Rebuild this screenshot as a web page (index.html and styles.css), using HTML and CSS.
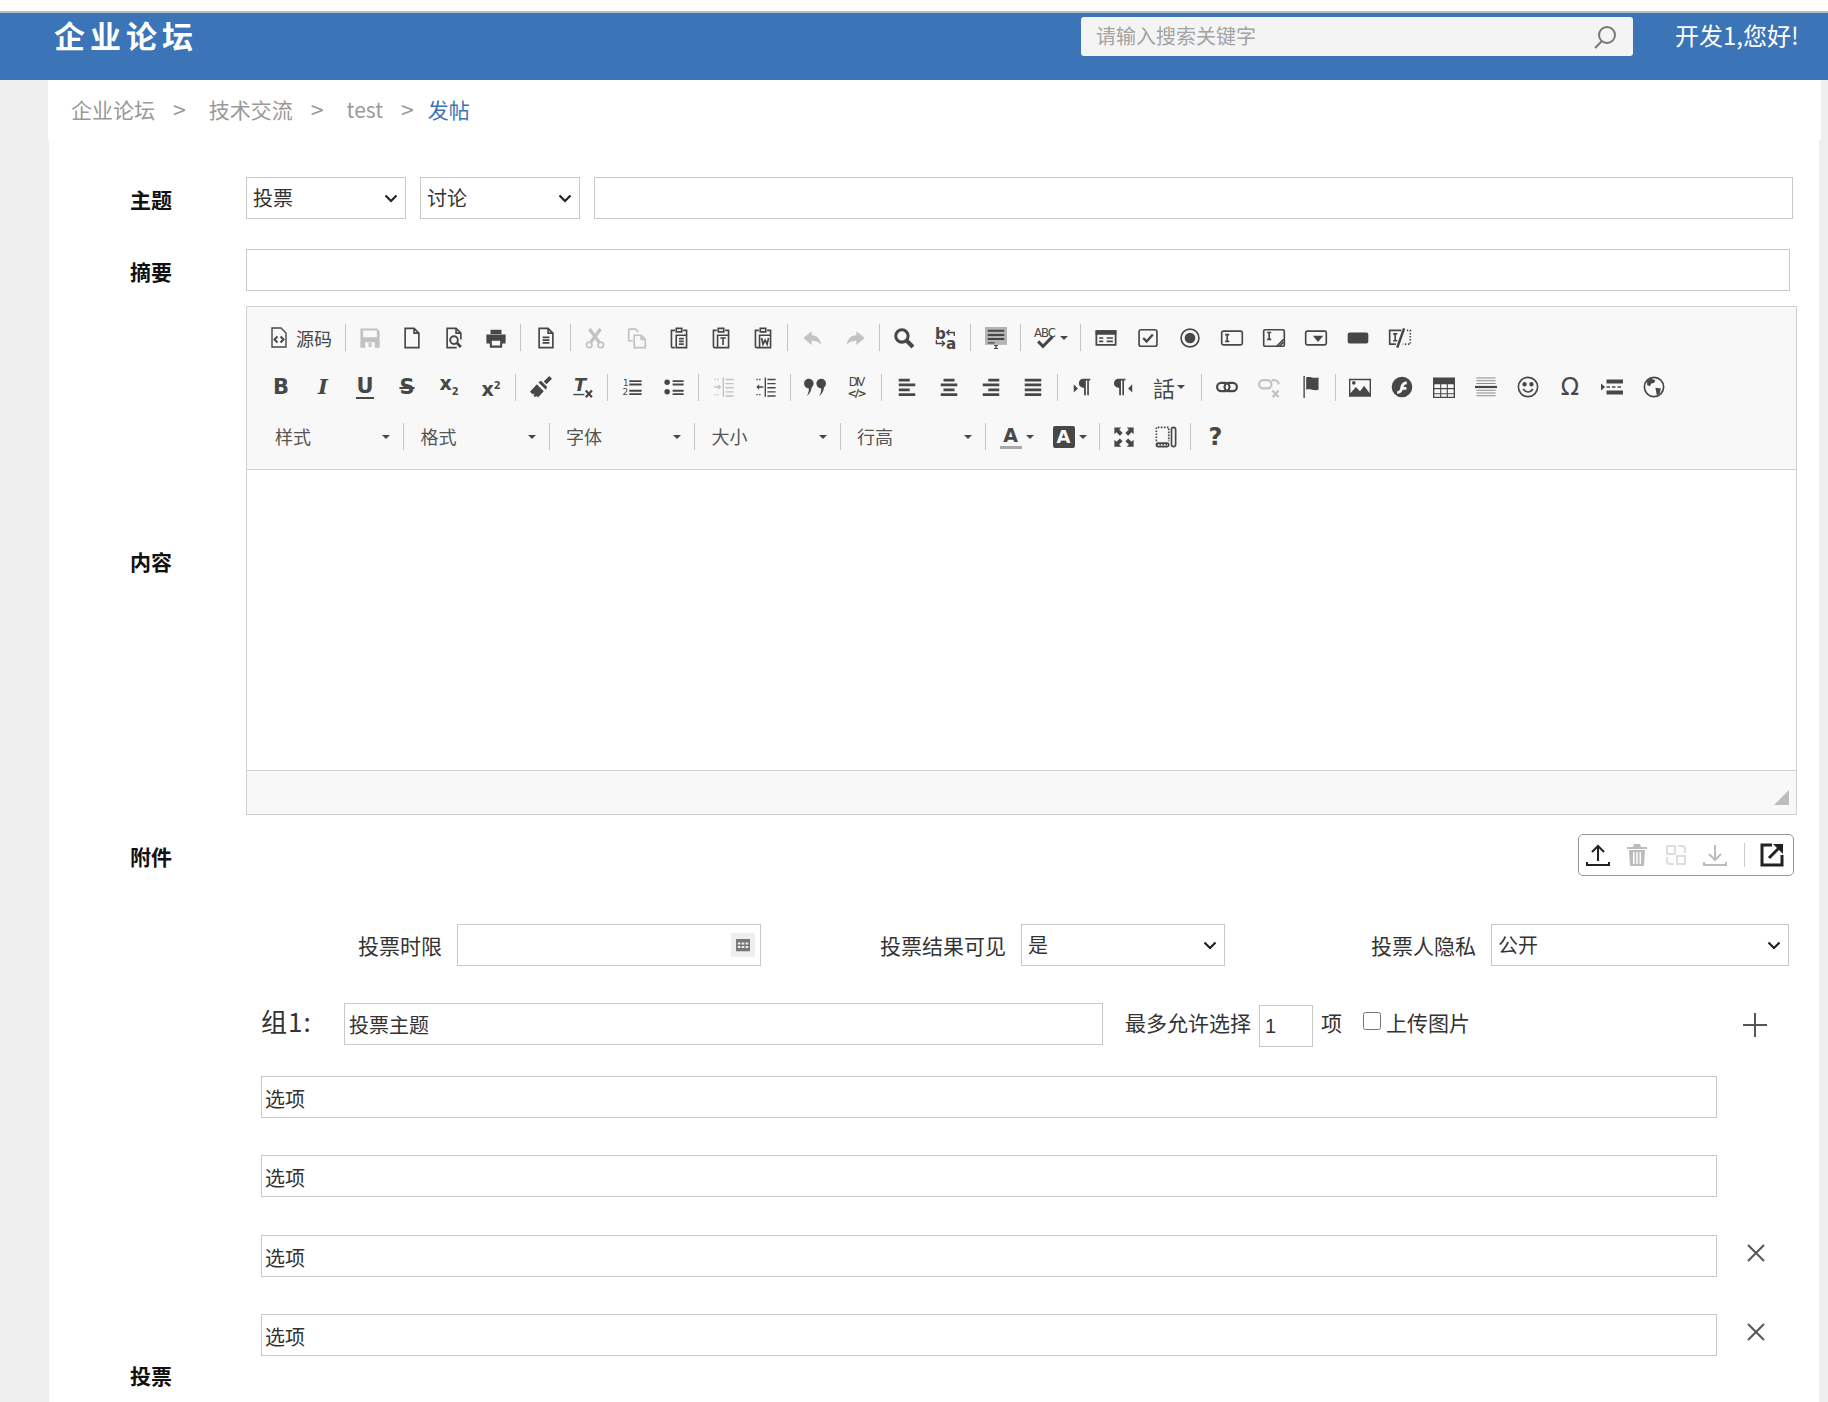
FILE: index.html
```html
<!DOCTYPE html>
<html>
	<head>
		<meta charset="UTF-8">
		<title>发帖</title>
		<link rel="stylesheet" href="styles.css">
	</head>

	<body>
		<div class="topLine"></div>
		<div class="header">
			<div class="brand">企业论坛</div>
			<div class="search">
				<span class="searchText">请输入搜索关键字</span>
				<svg class="searchIcon" viewBox="0 0 25 24"><circle cx="15" cy="10" r="8"/><path d="M10 16L3 23"/></svg>
			</div>
			<div class="hello">开发1,您好!</div>
		</div>

		<div class="crumb">
			<span>企业论坛</span><i>&gt;</i>
			<span>技术交流</span><i>&gt;</i>
			<span>test</span><i>&gt;</i>
			<a href="#">发帖</a>
		</div>

		<div class="form">
			<!--主题-->
			<div class="formRow first">
				<label class="name">主题</label>
				<select class="sel"><option>投票</option></select>
				<select class="sel"><option>讨论</option></select>
				<input class="txt titleInput" type="text">
			</div>
			<!--摘要-->
			<div class="formRow second">
				<label class="name">摘要</label>
				<input class="txt summaryInput" type="text">
			</div>
			<!--内容，编辑器-->
			<div class="formRow third">
				<label class="name">内容</label>
				<div class="editor">
					<div class="tools">
						<div class="toolRow">
							<span class="btn source">
								<svg class="sk" viewBox="0 0 16 21"><path d="M1 1h9l5 5v14H1z" stroke-width="1.400"/><path d="M6.500 9.500l-3 3 3 3M9.500 9.500l3 3-3 3" stroke-width="2"/></svg>
								<em>源码</em>
							</span>
							<b class="sep"></b>
							<span class="btn off"><svg viewBox="0 0 16 16"><path fill-rule="evenodd" d="M1 1h12l2 2v12H1zM3 2.500v5h10v-5zM4.500 11v4h7v-4zM7 11.500h2v3H7z"/></svg></span>
							<span class="btn"><svg class="sk" viewBox="0 0 16 16"><path d="M3 1h6.500L13 4.500V15H3zM9.500 1v3.500H13"/></svg></span>
							<span class="btn"><svg class="sk" viewBox="0 0 16 16"><path d="M10 15H3V1h6.500L13 4.500V9M9.500 1v3.500H13"/><circle cx="8" cy="9.500" r="2.800" stroke-width="1.400"/><path d="M10 11.500l3 3" stroke-width="2"/></svg></span>
							<span class="btn"><svg viewBox="0 0 16 16"><path fill-rule="evenodd" d="M4 2h8v3H4zM1 5.500h14V12h-2.500v3h-9v-3H1zM5 10v3.500h6V10z"/></svg></span>
							<b class="sep"></b>
							<span class="btn"><svg class="sk" viewBox="0 0 16 16"><path d="M3 1h6.500L13 4.500V15H3zM9.500 1v3.500H13M5.500 7.500h5M5.500 9.500h5M5.500 11.500h5"/></svg></span>
							<b class="sep"></b>
							<span class="btn off"><svg class="sk" viewBox="0 0 16 16"><path d="M4 1.500l7 9.500M12 1.500L5 11" stroke-width="2.400"/><circle cx="3.800" cy="13" r="2"/><circle cx="12.200" cy="13" r="2"/></svg></span>
							<span class="btn off"><svg class="sk" viewBox="0 0 16 16"><path d="M2 1.500h5l2 2M2 1.500V10h3M6 6h5l3 3v6H6zM11 6v3h3"/></svg></span>
							<span class="btn"><svg class="sk" viewBox="0 0 16 16"><path d="M5 2.500H2.500V14c0 .600.400 1 1 1H5M11 2.500h2.500V14M6 1h4v2.500H6zM6 6h7.500v9H6zM8 8.500h3.500M8 10.500h3.500M8 12.500h3.500"/></svg></span>
							<span class="btn"><svg class="sk" viewBox="0 0 16 16"><path d="M5 2.500H2.500V14c0 .600.400 1 1 1H5M11 2.500h2.500V14M6 1h4v2.500H6zM5.500 6h8v9h-8zM7.500 8h4M9.500 8v5"/></svg></span>
							<span class="btn"><svg class="sk" viewBox="0 0 16 16"><path d="M5 2.500H2.500V14c0 .600.400 1 1 1H5M11 2.500h2.500V14M6 1h4v2.500H6zM5.500 6h8v9h-8zM7 8l1 4.500 1.500-3 1.500 3L12 8"/></svg></span>
							<b class="sep"></b>
							<span class="btn off"><svg viewBox="0 0 16 16"><path d="M7 3L1 8l6 5v-3c3 0 5 .500 7 3-.500-4-3-7-7-7z"/></svg></span>
							<span class="btn off"><svg viewBox="0 0 16 16"><path d="M9 3l6 5-6 5v-3c-3 0-5 .500-7 3 .500-4 3-7 7-7z"/></svg></span>
							<b class="sep"></b>
							<span class="btn"><svg class="sk" viewBox="0 0 16 16"><circle cx="6.500" cy="6.500" r="4.500" stroke-width="2.200"/><path d="M10 10l4.500 4.500" stroke-width="3"/></svg></span>
							<span class="btn"><svg viewBox="0 0 16 16"><text class="small" x="0" y="8.500" font-size="11" font-weight="700">b</text><text class="small" x="8" y="16" font-size="11" font-weight="700">a</text><path class="thin" d="M8.500 4h5.500v2.500M10.500 2l-2 2 2 2M1 9.500V12h5.500M5 10l2 2-2 2"/></svg></span>
							<b class="sep"></b>
							<span class="btn"><svg viewBox="0 0 16 16"><path fill="#b5b5b5" d="M0 0h16v13H0z"/><path d="M2 2h12v1.500H2zM2 5h12v1.500H2zM2 8h12v1.500H2zM2 11h5v1H2zM6.500 13h3v.8h-1v1.400h1v.8h-3v-.8h1v-1.400h-1z"/></svg></span>
							<b class="sep"></b>
							<span class="btn wide"><svg viewBox="0 0 16 16"><text class="small" x="0" y="7.500" font-size="8.500" textLength="16">ABC</text><path class="thick" d="M3 10.500l3.500 3.500 7-7"/></svg><u class="caret"></u></span>
							<b class="sep"></b>
							<span class="btn"><svg class="sk" viewBox="0 0 16 16"><path d="M1 3h14v10H1z" stroke-width="1.300"/><path d="M1 3h14v2H1z" fill="#474747"/><path d="M3 8h3M3 10.500h3M8.500 8H13M8.500 10.500H13" stroke-width="1.200"/></svg></span>
							<span class="btn"><svg class="sk" viewBox="0 0 16 16"><rect x="1.500" y="2" width="13" height="12" rx="1.500"/><path d="M4.500 8l2.500 2.500 4.500-5" stroke-width="1.700"/></svg></span>
							<span class="btn"><svg class="sk" viewBox="0 0 16 16"><circle cx="8" cy="8" r="6.500"/><circle cx="8" cy="8" r="3.300" fill="#474747"/></svg></span>
							<span class="btn"><svg class="sk" viewBox="0 0 16 16"><rect x=".5" y="3" width="15" height="10" rx="1.200"/><path d="M3 5.500h3M3 10.500h3M4.500 5.500v5"/></svg></span>
							<span class="btn"><svg class="sk" viewBox="0 0 16 16"><rect x=".5" y="2" width="15" height="12" rx="1"/><path d="M3 4h3M3 9h3M4.500 4v5M15 9l-5 5M15 11l-3 3"/></svg></span>
							<span class="btn"><svg class="sk" viewBox="0 0 16 16"><rect x=".5" y="3" width="15" height="10" rx="1.200"/><path d="M7 7h5l-2.500 3z" fill="#474747"/></svg></span>
							<span class="btn"><svg viewBox="0 0 16 16"><rect x=".5" y="4" width="15" height="8" rx="1.500"/></svg></span>
							<span class="btn"><svg class="sk" viewBox="0 0 16 16"><path d="M9 2.500H.5v10H5M3 5h3M3 10h3M4.500 5v5" /><path d="M11 1L6 15" stroke-width="1.800"/><path d="M13 2.500h2.500v10H10" stroke-dasharray="1 1.200"/></svg></span>
						</div>

						<div class="toolRow">
							<span class="btn"><strong class="glyph">B</strong></span>
							<span class="btn"><strong class="glyph serif">I</strong></span>
							<span class="btn"><strong class="glyph under">U</strong></span>
							<span class="btn"><strong class="glyph strike">S</strong></span>
							<span class="btn"><strong class="glyph small">x<sub>2</sub></strong></span>
							<span class="btn"><strong class="glyph small">x<sup>2</sup></strong></span>
							<b class="sep"></b>
							<span class="btn"><svg viewBox="0 0 16 16"><path d="M0 11.500l5-5.500 5 5-4 4.500c-1-1-1.500-.800-2.500-.300l-1-1 .8-1.500-1.500.5z"/><path d="M6 4.500l2-1 4.500 4.500-1 2zM10 4l4-4 2 2-4 4z"/></svg></span>
							<span class="btn"><svg viewBox="0 0 16 16"><text class="small italic" x="1.500" y="11" font-size="13" font-weight="700">T</text><path d="M1 13h8v1H1z"/><path class="thin bold" d="M10 10.500l4.500 5M14.500 10.500l-4.500 5"/></svg></span>
							<b class="sep"></b>
							<span class="btn"><svg viewBox="0 0 16 16"><text class="small" x="1.500" y="7" font-size="6.500">1</text><text class="small" x="1" y="14" font-size="6.500">2</text><path d="M6 3h9v1.400H6zM6 5.500h9v1.400H6zM6 10h9v1.400H6zM6 12.500h9v1.400H6z"/></svg></span>
							<span class="btn"><svg viewBox="0 0 16 16"><circle cx="3" cy="4.500" r="2"/><circle cx="3" cy="11.500" r="2"/><path d="M7 3h8v1.400H7zM7 5.500h8v1.400H7zM7 10h8v1.400H7zM7 12.500h8v1.400H7z"/></svg></span>
							<b class="sep"></b>
							<span class="btn off"><svg viewBox="0 0 16 16"><path d="M7 1h1v14H7zM9 2h6v1H9zM9 5h6v1H9zM9 8h6v1H9zM9 11h6v1H9zM9 14h6v1H9zM1 7.500h3V6l2 2-2 2V8.500H1zM1 2h1v1H1zM3 2h1v1H3zM1 13h1v1H1zM3 13h1v1H3z"/></svg></span>
							<span class="btn"><svg viewBox="0 0 16 16"><path d="M7 1h1v14H7zM9 2h6v1H9zM9 5h6v1H9zM9 8h6v1H9zM9 11h6v1H9zM9 14h6v1H9zM6 7.500H3V6L1 8l2 2V8.500h3zM1 2h1v1H1zM3 2h1v1H3zM1 13h1v1H1zM3 13h1v1H3z"/></svg></span>
							<b class="sep"></b>
							<span class="btn"><svg viewBox="0 0 16 16"><circle cx="3.500" cy="5.500" r="3.500"/><circle cx="12.500" cy="5.500" r="3.500"/><path d="M5.500 6c.500 3.500-1 7-3.500 8.500 1.200-2 1.800-4 1.500-7.500zM14.500 6c.500 3.500-1 7-3.500 8.500 1.200-2 1.800-4 1.500-7.500z"/></svg></span>
							<span class="btn"><svg viewBox="0 0 16 16"><text class="small" x="2" y="7.500" font-size="8.500" textLength="12">DIV</text><text class="small" x="1" y="15.500" font-size="8" font-weight="700" textLength="14">&lt;/&gt;</text></svg></span>
							<b class="sep"></b>
							<span class="btn"><svg viewBox="0 0 16 16"><path d="M2 2h8v2H2zM2 5.500h12v2H2zM2 9h8v2H2zM2 12.500h12v2H2z"/></svg></span>
							<span class="btn"><svg viewBox="0 0 16 16"><path d="M4 2h8v2H4zM2 5.500h12v2H2zM4 9h8v2H4zM2 12.500h12v2H2z"/></svg></span>
							<span class="btn"><svg viewBox="0 0 16 16"><path d="M6 2h8v2H6zM2 5.500h12v2H2zM6 9h8v2H6zM2 12.500h12v2H2z"/></svg></span>
							<span class="btn"><svg viewBox="0 0 16 16"><path d="M2 2h12v2H2zM2 5.500h12v2H2zM2 9h12v2H2zM2 12.500h12v2H2z"/></svg></span>
							<b class="sep"></b>
							<span class="btn"><svg viewBox="0 0 16 16"><path d="M2 6l3 3-3 3zM8.500 2H14v1.200h-1V14h-1.200V3.200h-1V14H9.500V8.500a3.200 3.200 0 0 1-1-6.500z"/></svg></span>
							<span class="btn"><svg viewBox="0 0 16 16"><path d="M14 6l-3 3 3 3zM3.500 2H9v1.200H8V14H6.800V3.200h-1V14H4.500V8.500a3.200 3.200 0 0 1-1-6.500z"/></svg></span>
							<span class="btn wide lang"><span class="langText">話</span><u class="caret"></u></span>
							<b class="sep"></b>
							<span class="btn"><svg class="sk" viewBox="0 0 16 16"><rect x=".8" y="5" width="9" height="6" rx="3" stroke-width="1.600"/><rect x="6.200" y="5" width="9" height="6" rx="3" stroke-width="1.600"/></svg></span>
							<span class="btn off"><svg class="sk" viewBox="0 0 16 16"><rect x=".8" y="3" width="9" height="6" rx="3" stroke-width="1.600"/><path d="M10 3h2a3 3 0 0 1 3 3M10.500 10.500l4.500 5M15 10.500l-4.500 5" stroke-width="1.600"/></svg></span>
							<span class="btn"><svg viewBox="0 0 16 16"><path d="M1 0h1v16H1zM3 1c3-1 5 1 9 0v9c-4 1-6-1-9 0z" transform="translate(1.500)"/></svg></span>
							<b class="sep"></b>
							<span class="btn"><svg viewBox="0 0 16 16"><path fill-rule="evenodd" d="M0 2h16v13H0zM1 3v9.500L5 8l3 3 3-4 4 5.500V3z"/><circle cx="3.500" cy="5" r="1.300"/></svg></span>
							<span class="btn"><svg viewBox="0 0 16 16"><path fill-rule="evenodd" d="M8 .5a7.500 7.500 0 1 0 0 15 7.500 7.500 0 0 0 0-15zM11.500 4v2C9.800 6 9.500 6.800 9.200 8h2v2H8.500C8 12 6.500 13 4.500 13v-2c1.500 0 2-1 2.300-2.500C7.200 6 8.500 4 11.500 4z"/></svg></span>
							<span class="btn"><svg viewBox="0 0 16 16"><path fill-rule="evenodd" d="M0 1h16v15H0zM1 6v2.800h4.200V6zM6 6v2.800h4V6zM10.800 6v2.800H15V6zM1 9.700v2.800h4.200V9.700zM6 9.700v2.800h4V9.700zM10.800 9.700v2.800H15V9.700zM1 13.300V15h4.200v-1.700zM6 13.300V15h4v-1.700zM10.800 13.300V15H15v-1.700z"/></svg></span>
							<span class="btn"><svg viewBox="0 0 16 16"><path d="M0 7.200h16v1.600H0z"/><path fill="#8a8a8a" d="M1 1h14v.800H1zM1 3h14v.800H1zM1 5h14v.800H1zM1 10h14v.800H1zM1 12h14v.800H1zM1 14h14v.800H1z"/></svg></span>
							<span class="btn"><svg class="sk" viewBox="0 0 16 16"><circle cx="8" cy="8" r="7"/><path d="M4.500 9.500c1.800 2.800 5.200 2.800 7 0"/><circle cx="5.500" cy="6" r="1" fill="#474747"/><circle cx="10.500" cy="6" r="1" fill="#474747"/></svg></span>
							<span class="btn"><span class="omega">Ω</span></span>
							<span class="btn"><svg viewBox="0 0 16 16"><path d="M0 5.500L3 8l-3 2.500zM4 2.500h12v3H4zM4 10.500h12v3H4zM4 7.500h2.500v1H4zM8 7.500h2.500v1H8zM12 7.500h2.500v1H12z"/></svg></span>
							<span class="btn"><svg class="sk" viewBox="0 0 16 16"><circle cx="8" cy="8" r="7"/><path d="M3 3.500l3-1.500 3 1-1 2-2 .500-1 2-2-1zM9 8.500l4 .500-1 4-2 1-.500-3z" fill="#474747" stroke="none"/></svg></span>
						</div>

						<div class="toolRow">
							<span class="combo firstCombo">样式<u class="caret"></u></span>
							<b class="sep"></b>
							<span class="combo">格式<u class="caret"></u></span>
							<b class="sep"></b>
							<span class="combo">字体<u class="caret"></u></span>
							<b class="sep"></b>
							<span class="combo">大小<u class="caret"></u></span>
							<b class="sep"></b>
							<span class="combo">行高<u class="caret"></u></span>
							<b class="sep"></b>
							<span class="btn wide"><span class="colorA">A</span><u class="caret"></u></span>
							<span class="btn wide"><span class="colorB">A</span><u class="caret"></u></span>
							<b class="sep"></b>
							<span class="btn"><svg viewBox="0 0 16 16"><path d="M1 1h5L4.500 2.500l2.500 2.500L5 7 2.500 4.500 1 6zM15 1v5l-1.500-1.500L11 7 9 5l2.500-2.500L10 1zM1 15v-5l1.500 1.500L5 9l2 2-2.500 2.500L6 15zM15 15h-5l1.500-1.500L9 11l2-2 2.500 2.500L15 10z"/></svg></span>
							<span class="btn"><svg class="sk" viewBox="0 0 16 16"><path d="M1 11V1h9v10M1 13.500h9" stroke-dasharray="1.200 1"/><rect x="12" y="1" width="3" height="14" rx="1.500"/><rect x="1" y="12.500" width="9" height="2.500" rx="1.200"/></svg></span>
							<b class="sep"></b>
							<span class="btn"><strong class="glyph help">?</strong></span>
						</div>
					</div>
					<div class="editArea"></div>
					<div class="editFoot"><u class="grip"></u></div>
				</div>
			</div>
			<!--附件-->
			<div class="formRow fourth">
				<label class="name">附件</label>
				<div class="fileBar">
					<svg class="sk" viewBox="0 0 24 24"><path d="M1 19v3h22v-3M12 18V3M6 9l6-6 6 6" stroke-width="2"/></svg>
					<svg class="fa" viewBox="0 0 24 24"><path d="M2 4h20v2H2zM8 4l1-3h6l1 3zM4 7h16l-1 16H5zM8 9v12h1.500V9zM11.200 9v12h1.500V9zM14.500 9v12H16V9z" fill-rule="evenodd"/></svg>
					<svg class="sk fb" viewBox="0 0 24 24"><path d="M3 3h8v8H3zM13 13h8v8h-8zM14 3h4a3 3 0 0 1 3 3v4M10 21H6a3 3 0 0 1-3-3v-4" stroke-width="2"/></svg>
					<svg class="sk fa" viewBox="0 0 24 24"><path d="M1 19v3h22v-3M12 2v15M6 11l6 6 6-6" stroke-width="2"/></svg>
					<i class="fileSep"></i>
					<svg class="sk dark" viewBox="0 0 24 24"><path d="M12 2H2v20h20V12" stroke-width="3"/><path d="M9 15L19 5" stroke-width="3"/><path d="M13 1h10v10z" fill="#222" stroke="none"/></svg>
				</div>
			</div>
			<!--投票，下面还有内容，窗口里只露出这一段-->
			<div class="formRow voteRow">
				<label class="name">投票</label>
				<div class="vote">
					<div class="voteTop">
						<span class="voteLabel timeLabel">投票时限</span>
						<div class="dateBox"><span class="calendar"><svg viewBox="0 0 16 16"><path fill-rule="evenodd" d="M0 1h16v14H0zM2 5v2.500h3V5zM6.500 5v2.500h3V5zM11 5v2.500h3V5zM2 9v2.500h3V9zM6.500 9v2.500h3V9zM11 9v2.500h3V9z"/></svg></span></div>
						<span class="voteLabel seeLabel">投票结果可见</span>
						<select class="sel seeSel"><option>是</option></select>
						<span class="voteLabel privLabel">投票人隐私</span>
						<select class="sel privSel"><option>公开</option></select>
					</div>
					<div class="group">
						<span class="groupName">组1:</span>
						<input class="txt groupInput" type="text" value="投票主题">
						<span class="maxLabel">最多允许选择</span>
						<input class="txt maxInput" type="text" value="1">
						<span class="maxUnit">项</span>
						<input class="pic" type="checkbox">
						<span class="picLabel">上传图片</span>
						<svg class="plus" viewBox="0 0 24 24"><path d="M0 12h24M12 0v24"/></svg>
					</div>
					<div class="option"><input class="txt optInput" type="text" value="选项"></div>
					<div class="option"><input class="txt optInput" type="text" value="选项"></div>
					<div class="option"><input class="txt optInput" type="text" value="选项"><svg class="del" viewBox="0 0 18 18"><path d="M1 1l16 16M17 1L1 17"/></svg></div>
					<div class="option"><input class="txt optInput" type="text" value="选项"><svg class="del" viewBox="0 0 18 18"><path d="M1 1l16 16M17 1L1 17"/></svg></div>
				</div>
			</div>
		</div>
	</body>
</html>
```

FILE: styles.css
```css
*{
	margin: 0;
	padding: 0;
	box-sizing: border-box;
}
a{
	text-decoration: none;
}
input,select{
	outline: none;
	font-family: "Noto Sans CJK SC", sans-serif;
}
em,i,u{
	font-style: normal;
	text-decoration: none;
}
svg{
	overflow: visible;
}

html,body{
	height: 1402px;
	overflow: hidden;
}
body{
	background-color: #efefef;
	font-family: "Noto Sans CJK SC", sans-serif;
	font-size: 20px;
	color: #333;
}

.topLine{
	height: 13px;
	background-color: #fff;
	border-bottom: 2px solid #bdbdbd;
}

.header{
	display: flex;
	height: 67px;
	background-color: #3b74b7;
	color: #fff;
}
.header .brand{
	margin: 1px 0 0 54px;
	font-size: 31px;
	font-weight: 700;
	line-height: 42px;
	letter-spacing: 5px;
	white-space: nowrap;
}
.header .search{
	display: flex;
	align-items: center;
	justify-content: space-between;
	width: 552px;
	height: 39px;
	margin: 4px 0 0 auto;
	padding: 0 16px 0 15px;
	border-radius: 3px;
	background-color: #f4f4f4;
}
.header .searchText{
	margin-top: -2px;
	color: #a3a3a3;
	font-size: 20px;
	line-height: 39px;
}
.header .searchIcon{
	width: 25px;
	height: 24px;
	fill: none;
	stroke: #777;
	stroke-width: 2;
}
.header .hello{
	width: 153px;
	margin-left: 42px;
	font-size: 24px;
	line-height: 44px;
	white-space: nowrap;
}

.crumb{
	display: flex;
	align-items: center;
	height: 60px;
	margin: 0 7px 0 48px;
	padding: 0 0 2px 23px;
	background-color: #fff;
	color: #999;
	font-size: 21px;
}
.crumb i{
	margin: 0 23px 0 18px;
	font-size: 23px;
}
.crumb span:nth-of-type(3) + i{
	margin: 0 14px 0 18px;
}
.crumb a{
	color: #3b74b7;
}

.form{
	height: 1262px;
	margin: 0 9px 0 49px;
	padding-top: 37px;
	background-color: #fff;
	overflow: hidden;
}
.formRow{
	position: relative;
	display: flex;
	align-items: center;
	padding-left: 81px;
}
.name{
	flex: none;
	width: 116px;
	padding-top: 1px;
	font-size: 21px;
	font-weight: 700;
	color: #111;
}
.second{
	margin-top: 30px;
}
.third{
	margin-top: 15px;
}
.fourth{
	justify-content: space-between;
	margin-top: 19px;
	padding-right: 25px;
}
.voteRow{
	align-items: center;
	height: 900px;
	margin-top: 48px;
}
.voteRow .vote{
	align-self: flex-start;
}

.sel{
	appearance: none;
	height: 42px;
	padding: 0 0 1px 6px;
	border: 1px solid #c8c8c8;
	background: #fff url("data:image/svg+xml,%3Csvg xmlns='http://www.w3.org/2000/svg' width='14' height='9'%3E%3Cpath d='M1.500 1.500L7 7l5.500-5.500' fill='none' stroke='%23222' stroke-width='2.200'/%3E%3C/svg%3E") no-repeat right 7px center;
	color: #333;
	font-size: 20px;
}
.first .sel{
	width: 160px;
	margin-right: 14px;
}
.txt{
	height: 42px;
	border: 1px solid #c8c8c8;
	background-color: #fff;
	color: #333;
	font-size: 20px;
	padding: 3px 0 0 3px;
}
.titleInput{
	width: 1199px;
}
.summaryInput{
	width: 1544px;
}

/* 编辑器 */
.editor{
	width: 1551px;
	border: 1px solid #d1d1d1;
}
.tools{
	height: 163px;
	padding: 6px 0 0 13px;
	background-color: #f8f8f8;
	border-bottom: 1px solid #d1d1d1;
}
.toolRow{
	display: flex;
	align-items: center;
	height: 49.500px;
}
.btn{
	display: flex;
	flex: none;
	align-items: center;
	justify-content: center;
	width: 42px;
	height: 42px;
	color: #474747;
}
.btn svg{
	width: 22px;
	height: 22px;
	fill: #474747;
}
.btn svg.sk,.fileBar svg.sk{
	fill: none;
	stroke: #474747;
	stroke-width: 1.200;
}
.btn.off svg{
	opacity: .3;
}
.btn.source{
	justify-content: flex-start;
	width: 81.500px;
	padding-left: 11px;
}
.btn.source svg{
	width: 16px;
	height: 21px;
}
.btn.source em{
	margin-left: 9px;
	font-size: 18px;
	white-space: nowrap;
}
.btn.wide{
	justify-content: flex-start;
	width: 53px;
	padding-left: 10px;
}
.btn.wide .caret{
	margin: 0 0 0 4px;
}
.btn.lang{
	padding-left: 8px;
}
.btn.lang .caret{
	margin-left: 2px;
}
.langText{
	font-size: 22px;
	line-height: 22px;
}
.sep{
	display: flex;
	flex: none;
	justify-content: center;
	width: 7.500px;
}
.sep::before{
	content: "";
	width: 1px;
	height: 27px;
	background-color: #c4c4c4;
}
.combo{
	display: flex;
	flex: none;
	align-items: center;
	width: 138px;
	padding: 0 0 2px 13px;
	color: #555;
	font-size: 18px;
}
.firstCombo{
	margin-left: 2px;
}
.caret{
	width: 0;
	height: 0;
	margin: 2px 10px 0 auto;
	border: 4px solid transparent;
	border-top-color: #474747;
	border-bottom-width: 0;
}
.glyph{
	font-family: "DejaVu Sans", sans-serif;
	font-size: 21px;
	line-height: 24px;
	font-weight: 700;
}
.glyph.serif{
	font-family: "DejaVu Serif", serif;
	font-style: italic;
}
.glyph.under{
	border-bottom: 2px solid #474747;
	line-height: 21px;
}
.glyph.strike{
	text-decoration: line-through;
}
.glyph.small{
	font-size: 19px;
}
.glyph sub,.glyph sup{
	font-size: 10px;
}
.glyph.help{
	font-size: 24px;
}
svg .small{
	font-family: "DejaVu Sans", sans-serif;
	fill: #474747;
}
svg .italic{
	font-style: italic;
}
svg .thin{
	fill: none;
	stroke: #474747;
	stroke-width: 1;
}
svg .thin.bold{
	stroke-width: 1.600;
}
svg .thick{
	fill: none;
	stroke: #474747;
	stroke-width: 2.200;
}
.omega{
	font-family: "DejaVu Sans", sans-serif;
	font-size: 24px;
	line-height: 24px;
}
.colorA{
	width: 22px;
	border-bottom: 3px solid #aaa;
	font-family: "DejaVu Sans", sans-serif;
	font-size: 19px;
	font-weight: 700;
	line-height: 21px;
	text-align: center;
}
.colorB{
	width: 22px;
	height: 22px;
	border-radius: 2px;
	background-color: #474747;
	color: #f8f8f8;
	font-family: "DejaVu Sans", sans-serif;
	font-size: 18px;
	font-weight: 700;
	line-height: 22px;
	text-align: center;
}
.editArea{
	height: 301px;
	background-color: #fff;
	border-bottom: 1px solid #d1d1d1;
}
.editFoot{
	display: flex;
	align-items: flex-start;
	justify-content: flex-end;
	height: 43px;
	padding: 19px 7px 0 0;
	background-color: #f8f8f8;
}
.grip{
	width: 0;
	height: 0;
	border-style: solid;
	border-width: 0 0 15px 15px;
	border-color: transparent transparent #bdbdbd transparent;
}

/* 附件工具条 */
.fileBar{
	display: flex;
	align-items: center;
	width: 216px;
	height: 42px;
	padding-left: 7px;
	border: 1px solid #999;
	border-radius: 5px;
}
.fileBar svg{
	flex: none;
	width: 24px;
	height: 24px;
	margin-right: 15px;
}
.fileBar svg.sk{
	stroke: #222;
}
.fileBar svg.fa{
	opacity: .3;
	fill: #222;
}
.fileBar svg.sk.fa{
	fill: none;
}
.fileBar svg.fb{
	opacity: .15;
}
.fileBar .fileSep{
	flex: none;
	width: 1px;
	height: 24px;
	margin: 0 15px 0 2px;
	background-color: #ccc;
}
.fileBar svg:last-child{
	margin-right: 0;
}

/* 投票 */
.vote{
	width: 1560px;
}
.voteTop{
	display: flex;
	align-items: center;
}
.voteLabel{
	flex: none;
	font-size: 21px;
	color: #333;
}
.timeLabel{
	margin: 0 15px 0 112px;
}
.dateBox{
	display: flex;
	align-items: center;
	justify-content: flex-end;
	width: 304px;
	height: 42px;
	padding-right: 5px;
	border: 1px solid #c8c8c8;
}
.calendar{
	display: flex;
	align-items: center;
	justify-content: center;
	width: 24px;
	height: 24px;
	background-color: #eee;
}
.calendar svg{
	width: 14px;
	height: 14px;
	fill: #777;
}
.seeLabel{
	margin: 0 15px 0 119px;
}
.seeSel{
	width: 204px;
}
.privLabel{
	margin: 0 15px 0 146px;
}
.privSel{
	width: 298px;
}
.group{
	display: flex;
	align-items: flex-start;
	margin-top: 37px;
	padding-left: 15px;
	height: 44px;
}
.groupName{
	flex: none;
	width: 83px;
	font-size: 26px;
	line-height: 36px;
	letter-spacing: 1px;
}
.groupInput{
	width: 759px;
	padding: 0 0 0 4px;
}
.maxLabel{
	flex: none;
	margin: 0 8px 0 22px;
	font-size: 21px;
	line-height: 39px;
}
.maxInput{
	width: 54px;
	margin-top: 2px;
	padding: 0 0 0 5px;
	font-family: "Liberation Sans", sans-serif;
}
.maxUnit{
	margin: 0 21px 0 8px;
	font-size: 21px;
	line-height: 39px;
}
.pic{
	width: 18px;
	height: 18px;
	margin: 9px 5px 0 0;
}
.picLabel{
	font-size: 21px;
	line-height: 39px;
}
.plus{
	width: 24px;
	height: 24px;
	margin: 10px 0 0 273px;
	fill: none;
	stroke: #555;
	stroke-width: 2;
}
.option{
	display: flex;
	align-items: center;
	height: 42px;
	margin-top: 37.300px;
	padding-left: 15px;
}
.group + .option{
	margin-top: 29px;
}
.optInput{
	width: 1456px;
}
.del{
	width: 18px;
	height: 18px;
	margin: -5px 0 0 30px;
	fill: none;
	stroke: #555;
	stroke-width: 2;
}
```
